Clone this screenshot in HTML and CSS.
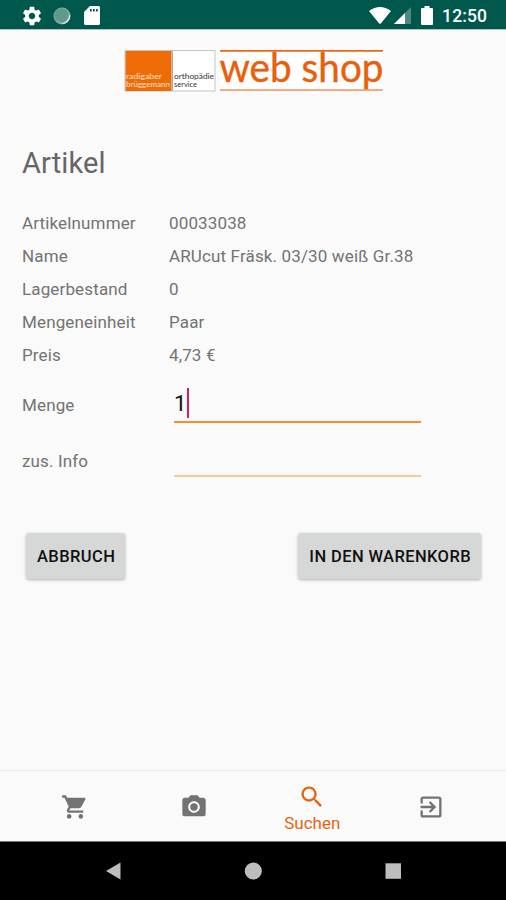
FILE: index.html
```html
<!DOCTYPE html>
<html lang="de">
<head>
    <meta charset="UTF-8">
    <meta name="viewport" content="width=device-width, initial-scale=1.0">
    <title>Artikel</title>
    <link rel="stylesheet" href="styles.css">
</head>
<body>
    <div class="status-bar">
        <div class="status-left">
            <svg class="gear" viewBox="0 0 24 24"><path d="M19.43 12.98c.04-.32.07-.64.07-.98s-.03-.66-.07-.98l2.11-1.65c.19-.15.24-.42.12-.64l-2-3.46c-.12-.22-.39-.3-.61-.22l-2.49 1c-.52-.4-1.08-.73-1.69-.98l-.38-2.65C14.46 2.18 14.25 2 14 2h-4c-.25 0-.46.18-.49.42l-.38 2.65c-.61.25-1.17.59-1.69.98l-2.49-1c-.23-.09-.49 0-.61.22l-2 3.46c-.13.22-.07.49.12.64l2.11 1.65c-.04.32-.07.65-.07.98s.03.66.07.98l-2.11 1.65c-.19.15-.24.42-.12.64l2 3.46c.12.22.39.3.61.22l2.49-1c.52.4 1.08.73 1.69.98l.38 2.65c.03.24.24.42.49.42h4c.25 0 .46-.18.49-.42l.38-2.65c.61-.25 1.17-.59 1.69-.98l2.49 1c.23.09.49 0 .61-.22l2-3.46c.12-.22.07-.49-.12-.64l-2.11-1.65zM12 15.5c-1.93 0-3.5-1.57-3.5-3.5s1.57-3.5 3.5-3.5 3.5 1.57 3.5 3.5-1.57 3.5-3.5 3.5z"/></svg>
            <svg class="disc" viewBox="0 0 18 18"><circle cx="9" cy="9" r="8.5" fill="#84aea5"/><circle cx="8.3" cy="8.3" r="7" fill="#609a8d"/><path d="M17 7A8.300 8.300 0 0 1 8 17Q15.500 15 17 7z" fill="#e6efed"/></svg>
            <svg class="card" viewBox="0 0 16 19"><path d="M6 0h8.500q1.500 0 1.500 1.500v16q0 1.500-1.500 1.500h-13Q0 19 0 17.500V6z"/><path d="M6 3h1.700v2.500H6zM9 3h1.700v2.500H9zM12 3h1.700v2.500H12z" fill="#00574b"/></svg>
        </div>
        <div class="status-right">
            <svg class="wifi" viewBox="0 0 22 17"><path d="M0 4Q11-4 22 4L12 16.300q-1 1-2 0z"/></svg>
            <svg class="signal" viewBox="0 0 17 17"><path d="M17 0v17H0z" fill="#4d897f"/><path d="M11 6v11H0z"/></svg>
            <svg class="battery" viewBox="0 0 12 19"><path d="M3.500 0h5v2H11q1 0 1 1v15q0 1-1 1H1q-1 0-1-1V3q0-1 1-1h2.500z"/></svg>
            <span class="clock">12:50</span>
        </div>
    </div>

    <header class="header">
        <svg class="logo" viewBox="0 0 260 42">
            <rect x="1" y=".5" width="90" height="40.500" fill="#fff" stroke="#c4c4c4"/>
            <rect x="1.500" y="1" width="46" height="40" fill="#ee6b06"/>
            <rect x="47.500" y="1" width="1.500" height="40" fill="#b5aaa2"/>
            <g class="logo-small">
                <text x="2" y="28.500" textLength="36" lengthAdjust="spacingAndGlyphs" fill="#fde3cf">radigaber</text>
                <text x="2" y="37" textLength="44" lengthAdjust="spacingAndGlyphs" fill="#fde3cf">brüggemann</text>
                <text x="50" y="28.500" textLength="40" lengthAdjust="spacingAndGlyphs" fill="#333">orthopädie</text>
                <text x="50" y="37" textLength="23" lengthAdjust="spacingAndGlyphs" fill="#333">service</text>
            </g>
            <rect x="96" y="0" width="163" height="41" fill="#fff"/>
            <rect x="96" y="0" width="163" height="1.700" fill="#e8640f"/>
            <rect x="96" y="39.300" width="163" height="1.500" fill="#f09158"/>
            <text class="logo-text" x="95.500" y="32" textLength="164" lengthAdjust="spacingAndGlyphs">web shop</text>
        </svg>
    </header>

    <main class="content">
        <h1>Artikel</h1>
        <dl class="details">
            <dt>Artikelnummer</dt><dd>00033038</dd>
            <dt>Name</dt><dd>ARUcut Fräsk. 03/30 weiß Gr.38</dd>
            <dt>Lagerbestand</dt><dd>0</dd>
            <dt>Mengeneinheit</dt><dd>Paar</dd>
            <dt>Preis</dt><dd>4,73 €</dd>
        </dl>
        <div class="field focused">
            <span class="label">Menge</span>
            <div class="input">1<span class="caret"></span></div>
        </div>
        <div class="field">
            <span class="label">zus. Info</span>
            <div class="input"></div>
        </div>
        <div class="buttons">
            <button>ABBRUCH</button>
            <button>IN DEN WARENKORB</button>
        </div>
    </main>

    <nav class="tabs">
        <a class="tab"><svg viewBox="0 0 24 24"><path d="M7 18c-1.100 0-1.990.9-1.990 2S5.900 22 7 22s2-.9 2-2-.9-2-2-2zM1 2v2h2l3.600 7.590-1.350 2.450c-.16.280-.25.610-.25.960 0 1.100.9 2 2 2h12v-2H7.420c-.14 0-.25-.11-.25-.25l.03-.12.900-1.630h7.450c.750 0 1.410-.41 1.750-1.030l3.580-6.490c.08-.14.120-.31.120-.48 0-.55-.45-1-1-1H5.210l-.94-2H1zm16 16c-1.100 0-1.990.9-1.990 2s.890 2 1.990 2 2-.9 2-2-.9-2-2-2z"/></svg></a>
        <a class="tab"><svg viewBox="0 0 24 24"><circle cx="12" cy="12" r="3.200"/><path d="M9 2L7.170 4H4c-1.100 0-2 .9-2 2v12c0 1.100.9 2 2 2h16c1.100 0 2-.9 2-2V6c0-1.100-.9-2-2-2h-3.170L15 2H9zm3 15c-2.760 0-5-2.240-5-5s2.240-5 5-5 5 2.240 5 5-2.240 5-5 5z"/></svg></a>
        <a class="tab active"><svg viewBox="0 0 24 24"><path d="M15.500 14h-.79l-.28-.27C15.410 12.590 16 11.110 16 9.500 16 5.910 13.090 3 9.500 3S3 5.910 3 9.500 5.910 16 9.500 16c1.610 0 3.090-.59 4.230-1.570l.27.280v.790l5 4.990L20.490 19l-4.990-5zm-6 0C7.010 14 5 11.990 5 9.500S7.010 5 9.500 5 14 7.010 14 9.500 11.990 14 9.500 14z"/></svg><span>Suchen</span></a>
        <a class="tab"><svg viewBox="0 0 24 24"><path d="M10.090 15.590L11.500 17l5-5-5-5-1.410 1.410L12.670 11H3v2h9.670l-2.580 2.590zM19 3H5c-1.110 0-2 .9-2 2v4h2V5h14v14H5v-4H3v4c0 1.100.890 2 2 2h14c1.100 0 2-.9 2-2V5c0-1.100-.9-2-2-2z"/></svg></a>
    </nav>

    <div class="system-nav">
        <svg viewBox="0 0 18 18"><path d="M2 9L16.500 .5v17z"/></svg>
        <svg viewBox="0 0 18 18"><circle cx="9.300" cy="9" r="8.600"/></svg>
        <svg viewBox="0 0 18 18"><rect x="1.500" y="1.300" width="15.500" height="15.500"/></svg>
    </div>
</body>
</html>
```

FILE: styles.css
```css
* {
    box-sizing: border-box;
}
body {
    margin: 0;
    height: 900px;
    display: flex;
    flex-direction: column;
    background-color: #fafafa;
    font-family: Roboto, "Liberation Sans", sans-serif;
    color: #737373;
    overflow: hidden;
}
svg {
    display: block;
    fill: currentColor;
}

/* Status bar */
.status-bar {
    height: 30px;
    padding: 0 19px 0 21px;
    display: flex;
    justify-content: space-between;
    background-color: #00574b;
    border-bottom: 1px solid #a9c5c0;
    color: #fff;
}
.status-left,
.status-right {
    display: flex;
    align-items: center;
    padding-top: 2px;
}
.gear {
    width: 22px;
    height: 22px;
    margin-right: 10px;
}
.disc {
    width: 18px;
    height: 18px;
    margin-right: 13px;
}
.card {
    width: 16px;
    height: 19px;
}
.wifi {
    width: 22px;
    height: 17px;
    margin-right: 3px;
}
.signal {
    width: 17px;
    height: 17px;
    margin-right: 10px;
}
.battery {
    width: 12px;
    height: 19px;
    margin-right: 9px;
}
.clock {
    font-size: 17.5px;
    font-weight: 500;
    letter-spacing: 0.1px;
}

/* Logo */
.header {
    padding-top: 20px;
    height: 110px;
}
.logo {
    width: 260px;
    height: 42px;
    margin-left: 124px;
    overflow: visible;
}
.logo-small {
    font-family: Lato, sans-serif;
    font-size: 7px;
}
.logo-text {
    font-family: Lato, sans-serif;
    font-size: 40px;
    fill: #e8600c;
    stroke: #e8600c;
    stroke-width: 0.4px;
}

/* Article */
.content {
    flex: 1;
    padding: 0 22px;
    font-size: 17px;
    letter-spacing: 0.14px;
}
h1 {
    margin: 0;
    font-size: 29px;
    font-weight: 400;
    line-height: 46px;
    letter-spacing: 0.1px;
    color: #666;
}
.details {
    margin: 21px 0 0;
    display: grid;
    grid-template-columns: 147px 1fr;
    line-height: 33px;
}
.details dd {
    margin: 0;
}
.field {
    display: flex;
    align-items: center;
    height: 54px;
}
.field.focused {
    height: 56px;
    margin-top: 5px;
    margin-bottom: 1px;
}
.label {
    width: 152px;
}
.input {
    width: 247px;
    height: 32px;
    display: flex;
    align-items: center;
    border-bottom: 2px solid #f7c79d;
    font-size: 22px;
    color: #111;
}
.focused .input {
    height: 35px;
    padding-bottom: 2px;
    border-bottom-color: #f88d2b;
}
.caret {
    width: 2px;
    height: 30px;
    background-color: #d01f5c;
}
.buttons {
    display: flex;
    justify-content: space-between;
    margin: 45px 3px 0 4px;
}
button {
    height: 46px;
    padding: 0 10px 0 11px;
    border: 0;
    border-radius: 3px;
    background-color: #d6d7d7;
    box-shadow: 0 1px 3px rgba(0, 0, 0, 0.3);
    font-family: inherit;
    font-size: 16.5px;
    font-weight: 500;
    letter-spacing: 0.4px;
    color: #111;
}

/* Tabs */
.tabs {
    height: 72px;
    padding: 2px 16px 0;
    display: flex;
    border-top: 1px solid #ececec;
    border-bottom: 1px solid #777;
}
.tab {
    flex: 1;
    display: flex;
    flex-direction: column;
    align-items: center;
    justify-content: center;
}
.tab svg {
    width: 28px;
    height: 28px;
}
.tab.active {
    padding-top: 2px;
    color: #e8640f;
    font-size: 17px;
    line-height: 20px;
}
.tab.active span {
    margin-top: 2px;
}

/* System navigation */
.system-nav {
    height: 58px;
    padding: 0 104px;
    display: flex;
    align-items: center;
    justify-content: space-between;
    background-color: #000;
    color: #bdbdbd;
}
.system-nav svg {
    width: 18px;
    height: 18px;
}
```
